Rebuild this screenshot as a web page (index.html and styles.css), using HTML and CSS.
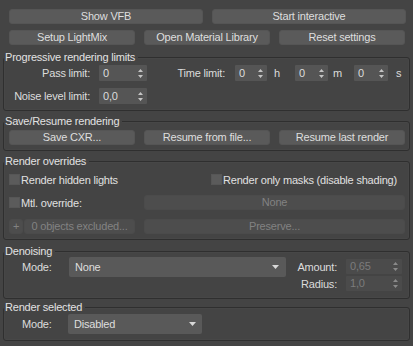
FILE: index.html
```html
<!DOCTYPE html>
<html>
<head>
<meta charset="utf-8">
<link rel="stylesheet" href="styles.css">
</head>
<body>
<div class="panel">
  <div class="top-row two">
    <div class="btn">Show VFB</div>
    <div class="btn">Start interactive</div>
  </div>
  <div class="top-row three r2">
    <div class="btn">Setup LightMix</div>
    <div class="btn">Open Material Library</div>
    <div class="btn">Reset settings</div>
  </div>

  <div class="group g1">
    <div class="gtitle">Progressive rendering limits</div>
    <div class="lim-row first">
      <div class="lbl lbl-left">Pass limit:</div>
      <div class="spin w48"><span>0</span><svg width="5" height="9" viewBox="0 0 5 9"><path d="M2.5 0L5 3H0z M2.5 9L5 6H0z" fill="#c4c4c4"/></svg></div>
      <div class="lbl lbl-time">Time limit:</div>
      <div class="spin w32"><span>0</span><svg width="5" height="9" viewBox="0 0 5 9"><path d="M2.5 0L5 3H0z M2.5 9L5 6H0z" fill="#c4c4c4"/></svg></div>
      <div class="unit u-h">h</div>
      <div class="spin w33"><span>0</span><svg width="5" height="9" viewBox="0 0 5 9"><path d="M2.5 0L5 3H0z M2.5 9L5 6H0z" fill="#c4c4c4"/></svg></div>
      <div class="unit u-m">m</div>
      <div class="spin w34"><span>0</span><svg width="5" height="9" viewBox="0 0 5 9"><path d="M2.5 0L5 3H0z M2.5 9L5 6H0z" fill="#c4c4c4"/></svg></div>
      <div class="unit u-s">s</div>
    </div>
    <div class="lim-row second">
      <div class="lbl lbl-left">Noise level limit:</div>
      <div class="spin w48"><span>0,0</span><svg width="5" height="9" viewBox="0 0 5 9"><path d="M2.5 0L5 3H0z M2.5 9L5 6H0z" fill="#c4c4c4"/></svg></div>
    </div>
  </div>

  <div class="group g2">
    <div class="gtitle">Save/Resume rendering</div>
    <div class="cols3">
      <div class="btn">Save CXR...</div>
      <div class="btn">Resume from file...</div>
      <div class="btn">Resume last render</div>
    </div>
  </div>

  <div class="group g3">
    <div class="gtitle">Render overrides</div>
    <div class="ov-row r1">
      <div class="chk-item left-half"><span class="chk"></span>Render hidden lights</div>
      <div class="chk-item"><span class="chk"></span>Render only masks (disable shading)</div>
    </div>
    <div class="ov-row r2">
      <div class="chk-item left-col"><span class="chk"></span>Mtl. override:</div>
      <div class="btn dis right-col">None</div>
    </div>
    <div class="ov-row r3">
      <div class="left-col split">
        <div class="btn dis plus">+</div>
        <div class="btn dis excl">0 objects excluded...</div>
      </div>
      <div class="btn dis right-col">Preserve...</div>
    </div>
  </div>

  <div class="group g4">
    <div class="gtitle">Denoising</div>
    <div class="den-row">
      <div class="mode-lbl">Mode:</div>
      <div class="combo c-den"><span>None</span><svg width="7" height="4" viewBox="0 0 7 4"><path d="M0 0H7L3.5 4z" fill="#d8d8d8"/></svg></div>
      <div class="den-right">
        <div class="den-line">
          <div class="lbl den-lbl">Amount:</div>
          <div class="spin dspin w56"><span>0,65</span><svg width="5" height="9" viewBox="0 0 5 9"><path d="M2.5 0L5 3H0z M2.5 9L5 6H0z" fill="#8a8a8a"/></svg></div>
        </div>
        <div class="den-line l2">
          <div class="lbl den-lbl">Radius:</div>
          <div class="spin dspin w56"><span>1,0</span><svg width="5" height="9" viewBox="0 0 5 9"><path d="M2.5 0L5 3H0z M2.5 9L5 6H0z" fill="#8a8a8a"/></svg></div>
        </div>
      </div>
    </div>
  </div>

  <div class="group g5">
    <div class="gtitle">Render selected</div>
    <div class="sel-row">
      <div class="mode-lbl m2">Mode:</div>
      <div class="combo c-sel"><span>Disabled</span><svg width="7" height="4" viewBox="0 0 7 4"><path d="M0 0H7L3.5 4z" fill="#d8d8d8"/></svg></div>
    </div>
  </div>
</div>
</body>
</html>
```

FILE: styles.css
```css
html, body {
  margin: 0;
  padding: 0;
  background: #444444;
}
body {
  font-family: "Liberation Sans", Arial, sans-serif;
  font-size: 11px;
  letter-spacing: -0.2px;
  color: #dcdcdc;
  width: 413px;
  height: 346px;
  overflow: hidden;
}
.panel {
  padding: 9px 4px 0 3px;
}
.top-row {
  display: flex;
  gap: 9px;
  margin: 0 3px 0 6px;
}
.top-row.two .btn { width: 194px; }
.top-row.three { gap: 9px; }
.top-row.three .btn { width: 126px; }
.top-row.r2 { margin-top: 6px; }

.btn {
  height: 15px;
  box-sizing: border-box;
  background: #5a5a5a;
  border: 1px solid #555555;
  border-radius: 3px;
  display: flex;
  align-items: center;
  justify-content: center;
  color: #dedede;
  line-height: 13px;
  white-space: nowrap;
}
.btn.dis {
  background: #4d4d4d;
  border-color: #4b4b4b;
  color: #828282;
}

.group {
  border: 1px solid #2f2f2f;
  border-radius: 3px;
  box-shadow: inset 0 0 0 1px #474747;
  width: 407px;
  box-sizing: border-box;
}
.gtitle {
  display: block;
  width: max-content;
  margin-top: -7px;
  line-height: 13px;
  height: 13px;
  padding: 0 3px 0 1px;
  background: #444444;
  color: #e2e2e2;
}

.g1 { margin-top: 12px; padding-bottom: 6px; }
.lim-row {
  display: flex;
  align-items: center;
  height: 16px;
}
.lim-row.first { margin-top: 1px; }
.lim-row.second { margin-top: 7px; }
.lbl { white-space: nowrap; }
.lbl-left { width: 86px; text-align: right; margin-right: 9px; }
.lbl-time { width: 78px; text-align: right; margin-right: 10px; }
.unit { box-sizing: border-box; }
.u-h { width: 28px; padding-left: 7px; }
.u-m { width: 26px; padding-left: 5px; }
.u-s { padding-left: 8px; }

.spin {
  height: 16px;
  box-sizing: border-box;
  background: #555555;
  border-radius: 1px;
  display: flex;
  align-items: center;
  justify-content: space-between;
  padding: 0 4px 0 4px;
  color: #dcdcdc;
}
.spin span { line-height: 13px; }
.w48 { width: 48px; }
.w32 { width: 32px; }
.w33 { width: 33px; }
.w34 { width: 34px; }
.w56 { width: 56px; height: 15px; }
.spin.dspin {
  background: #4b4b4b;
  color: #7c7c7c;
}

.g2 { margin-top: 10px; padding: 0 3px 5px 5px; }
.g2 .gtitle { margin-left: -5px; }
.cols3 {
  display: flex;
  gap: 9px;
  margin-top: 2px;
}
.cols3 .btn { width: 126px; }

.g3 { margin-top: 10px; padding: 0 3px 5px 5px; }
.g3 .gtitle { margin-left: -5px; }
.ov-row {
  display: flex;
  align-items: center;
  height: 15px;
}
.ov-row.r1 { margin-top: 4px; }
.ov-row.r2 { margin-top: 8px; gap: 9px; }
.ov-row.r3 { margin-top: 9px; gap: 9px; }
.chk-item {
  display: flex;
  align-items: center;
  white-space: nowrap;
  color: #e0e0e0;
}
.left-half { width: 202px; }
.left-col { width: 126px; }
.right-col { width: 261px; }
.chk {
  width: 11px;
  height: 11px;
  box-sizing: border-box;
  background: #5b5b5b;
  border: 1px solid #565656;
  margin-right: 1px;
  flex: none;
}
.split { display: flex; gap: 1px; }
.plus { width: 14px; }
.excl { width: 111px; }

.g4 { margin-top: 11px; padding-bottom: 7px; }
.den-row {
  display: flex;
  align-items: flex-start;
  margin-top: -1px;
}
.mode-lbl {
  width: 65px;
  box-sizing: border-box;
  padding-left: 18px;
  line-height: 20px;
  color: #dcdcdc;
}
.combo {
  height: 20px;
  box-sizing: border-box;
  background: #595959;
  border-radius: 2px;
  display: flex;
  align-items: center;
  justify-content: space-between;
  padding: 0 7px 0 6px;
  color: #dedede;
}
.c-den { width: 217px; }
.den-right { margin-top: 2px; }
.den-line { display: flex; align-items: center; }
.den-line.l2 { margin-top: 2px; }
.den-lbl { width: 51px; text-align: right; margin-right: 9px; }

.g5 { margin-top: 8px; padding-bottom: 6px; }
.sel-row { display: flex; margin-top: 0; }
.mode-lbl.m2 { width: 64px; }
.c-sel { width: 134px; padding-right: 6px; }
```
